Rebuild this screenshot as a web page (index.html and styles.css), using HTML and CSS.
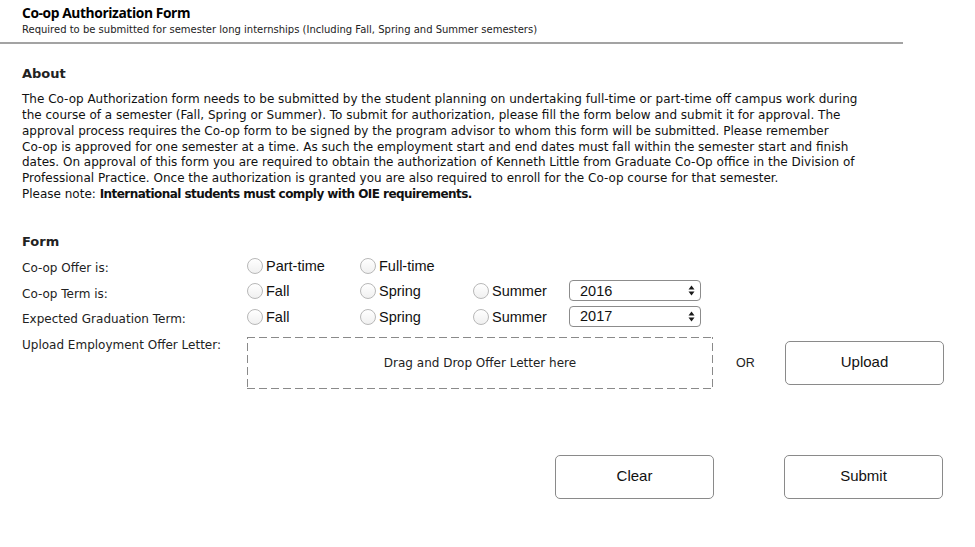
FILE: index.html
```html
<!DOCTYPE html>
<html>
<head>
<meta charset="utf-8">
<link rel="stylesheet" href="styles.css">
</head>
<body>
<div class="page">
  <header class="top">
    <h1 class="title">Co-op Authorization Form</h1>
    <p class="subtitle">Required to be submitted for semester long internships (Including Fall, Spring and Summer semesters)</p>
  </header>

  <section class="about">
    <h2 class="heading">About</h2>
    <p class="para">The Co-op Authorization form needs to be submitted by the student planning on undertaking full-time or part-time off campus work during<br>the course of a semester (Fall, Spring or Summer). To submit for authorization, please fill the form below and submit it for approval. The<br>approval process requires the Co-op form to be signed by the program advisor to whom this form will be submitted. Please remember<br>Co-op is approved for one semester at a time. As such the employment start and end dates must fall within the semester start and finish<br>dates. On approval of this form you are required to obtain the authorization of Kenneth Little from Graduate Co-Op office in the Division of<br>Professional Practice. Once the authorization is granted you are also required to enroll for the Co-op course for that semester.<br>Please note: <b>International students must comply with OIE requirements.</b></p>
  </section>

  <section class="form">
    <h2 class="heading">Form</h2>
    <div class="row">
      <span class="label">Co-op Offer is:</span>
      <label class="opt"><span class="radio"></span>Part-time</label>
      <label class="opt"><span class="radio"></span>Full-time</label>
    </div>
    <div class="row">
      <span class="label">Co-op Term is:</span>
      <label class="opt"><span class="radio"></span>Fall</label>
      <label class="opt"><span class="radio"></span>Spring</label>
      <label class="opt opt3"><span class="radio"></span>Summer</label>
      <div class="select"><span>2016</span><svg class="arrows" width="7" height="11" viewBox="0 0 7 11"><path d="M3.5 0.5 L6.5 4.5 L0.5 4.5 Z M0.5 6.5 L6.5 6.5 L3.5 10.5 Z" fill="#1a1a1a"/></svg></div>
    </div>
    <div class="row">
      <span class="label">Expected Graduation Term:</span>
      <label class="opt"><span class="radio"></span>Fall</label>
      <label class="opt"><span class="radio"></span>Spring</label>
      <label class="opt opt3"><span class="radio"></span>Summer</label>
      <div class="select"><span>2017</span><svg class="arrows" width="7" height="11" viewBox="0 0 7 11"><path d="M3.5 0.5 L6.5 4.5 L0.5 4.5 Z M0.5 6.5 L6.5 6.5 L3.5 10.5 Z" fill="#1a1a1a"/></svg></div>
    </div>
    <div class="row upload-row">
      <span class="label">Upload Employment Offer Letter:</span>
      <div class="drop">Drag and Drop Offer Letter here</div>
      <span class="or">OR</span>
      <button class="btn">Upload</button>
    </div>
    <div class="actions">
      <button class="btn">Clear</button>
      <button class="btn">Submit</button>
    </div>
  </section>
</div>
</body>
</html>
```

FILE: styles.css
```css
html, body {
  margin: 0;
  padding: 0;
  background: #fff;
}
body {
  font-family: "DejaVu Sans", "Lucida Grande", sans-serif;
  color: #111;
}
.page {
  min-height: 547px;
}
.top {
  width: 881px;
  padding: 4px 0 0 22px;
  height: 38px;
  border-bottom: 2px solid #a3a3a3;
}
.title {
  margin: 0;
  font-family: "Open Sans", "DejaVu Sans", sans-serif;
  font-size: 13.8px;
  line-height: 18px;
  font-weight: 700;
  letter-spacing: -0.4px;
  color: #000;
}
.subtitle {
  margin: 1px 0 0;
  font-size: 10px;
  line-height: 14px;
  color: #222;
}
.about {
  padding: 21px 0 0 22px;
}
.heading {
  margin: 0;
  font-size: 13px;
  line-height: 18px;
  font-weight: bold;
  color: #222;
}
.para {
  margin: 9px 0 0;
  font-size: 12px;
  line-height: 15.85px;
  width: 900px;
  color: #111;
}
.para b {
  letter-spacing: -0.55px;
}
.form {
  padding: 30px 0 0 22px;
}
.form .heading {
  margin-bottom: 2px;
}
.row {
  display: flex;
  align-items: center;
  height: 25.5px;
  font-family: "Liberation Sans", Arial, sans-serif;
  font-size: 14.5px;
  color: #111;
}
.label {
  flex-shrink: 0;
  width: 225px;
  font-family: "DejaVu Sans", sans-serif;
  font-size: 12px;
  color: #222;
  padding-top: 5px;
}
.opt {
  flex-shrink: 0;
  display: flex;
  align-items: center;
  width: 113px;
}
.opt3 {
  width: 94px;
}
.radio {
  width: 14px;
  height: 14px;
  border: 1px solid #b8b8b8;
  border-radius: 50%;
  background: linear-gradient(#fff, #f0f0f0);
  margin-right: 3px;
  box-sizing: content-box;
}
.select {
  flex-shrink: 0;
  display: flex;
  justify-content: space-between;
  align-items: center;
  width: 132px;
  height: 21px;
  border: 1px solid #8c8c8c;
  border-radius: 4px;
  padding: 0 5px 0 10px;
  box-sizing: border-box;
  margin: -1px 0 0 2px;
  font-size: 14.5px;
  background: #fff;
}
.arrows {
  display: block;
}
.upload-row {
  height: auto;
  align-items: flex-start;
  margin-top: 8px;
}
.upload-row .label {
  padding-top: 1px;
}
.drop {
  flex-shrink: 0;
  width: 466px;
  height: 52px;
  box-sizing: border-box;
  background:
    linear-gradient(90deg, #8a8a8a 8px, transparent 8px) top left / 12px 1px repeat-x,
    linear-gradient(90deg, #8a8a8a 8px, transparent 8px) bottom left / 12px 1px repeat-x,
    linear-gradient(180deg, #8a8a8a 8px, transparent 8px) left 0 top 6px / 1px 12px repeat-y,
    linear-gradient(180deg, #8a8a8a 8px, transparent 8px) right 0 top 6px / 1px 12px repeat-y;
  display: flex;
  align-items: center;
  justify-content: center;
  font-family: "DejaVu Sans", sans-serif;
  font-size: 12px;
  color: #222;
}
.or {
  flex-shrink: 0;
  margin: 19px 0 0 23px;
  font-size: 12.5px;
  color: #222;
  width: 25px;
}
.btn {
  flex-shrink: 0;
  width: 159px;
  height: 44px;
  border: 1px solid #8a8a8a;
  border-radius: 5px;
  background: #fff;
  font-family: "Liberation Sans", Arial, sans-serif;
  font-size: 15px;
  color: #111;
  padding: 0 0 3px;
}
.upload-row .btn {
  margin: 4px 0 0 24px;
}
.actions {
  display: flex;
  gap: 70px;
  margin: 66px 0 0 533px;
}
```
